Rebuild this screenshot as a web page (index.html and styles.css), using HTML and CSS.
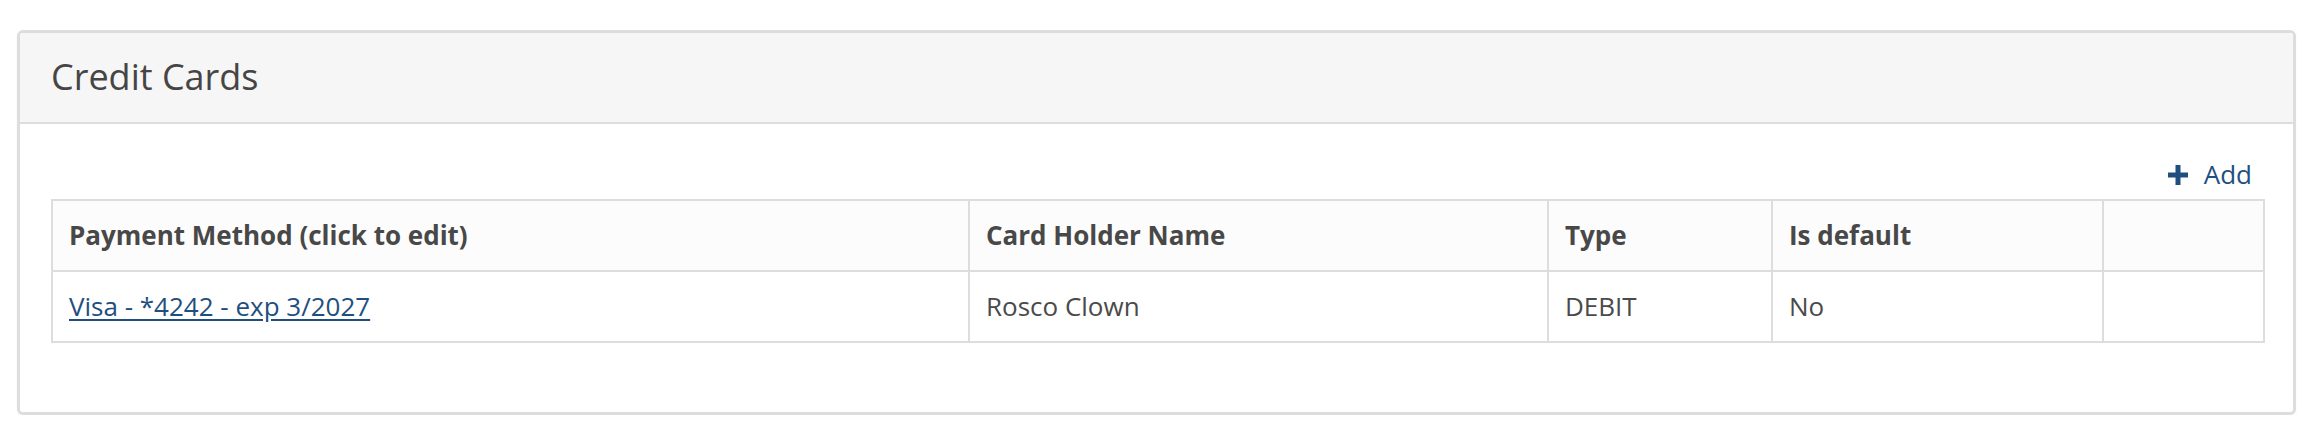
FILE: index.html
```html
<!DOCTYPE html>
<html lang="en">
<head>
<meta charset="utf-8">
<title>Credit Cards</title>
<link rel="stylesheet" href="styles.css">
</head>
<body>
<section class="panel">
  <header class="panel-heading">
    <h2 class="panel-title">Credit Cards</h2>
  </header>
  <div class="panel-body">
    <div class="actions">
      <a class="add-link" href="#">
        <svg class="plus" width="20" height="20" viewBox="0 0 20 20" aria-hidden="true">
          <rect x="7.5" y="0" width="5" height="20" fill="currentColor"/>
          <rect x="0" y="7.5" width="20" height="5" fill="currentColor"/>
        </svg>
        <span>Add</span>
      </a>
    </div>
    <table class="cards-table">
      <colgroup>
        <col class="c-method">
        <col class="c-holder">
        <col class="c-type">
        <col class="c-default">
        <col class="c-actions">
      </colgroup>
      <thead>
        <tr>
          <th>Payment Method (click to edit)</th>
          <th>Card Holder Name</th>
          <th>Type</th>
          <th>Is default</th>
          <th></th>
        </tr>
      </thead>
      <tbody>
        <tr>
          <td><a class="card-link" href="#">Visa - *4242 - exp 3/2027</a></td>
          <td>Rosco Clown</td>
          <td>DEBIT</td>
          <td>No</td>
          <td></td>
        </tr>
      </tbody>
    </table>
  </div>
</section>
</body>
</html>
```

FILE: styles.css
```css
* {
  box-sizing: border-box;
}

html, body {
  margin: 0;
  padding: 0;
  background: #ffffff;
}

body {
  font-family: "Open Sans", "Noto Sans", "Liberation Sans", sans-serif;
  font-size: 26px;
  line-height: 37px;
  color: #4a4a4a;
  padding: 30px 22px 0 17px;
}

.panel {
  border: 3px solid #dddddd;
  border-radius: 6px;
  background: #ffffff;
  box-shadow: 0 1px 2px rgba(0, 0, 0, 0.05);
  overflow: hidden;
}

.panel-heading {
  background: #f6f6f6;
  border-bottom: 2px solid #dddddd;
  padding: 24px 31px 25px 31px;
}

.panel-title {
  margin: 0;
  font-size: 36px;
  line-height: 40px;
  font-weight: 400;
  color: #454545;
}

.panel-body {
  padding: 30px 30px 30px 31px;
}

.actions {
  display: flex;
  justify-content: flex-end;
  padding-right: 11px;
  margin-bottom: 5px;
  line-height: 40px;
}

.add-link {
  color: #1f4f7e;
  text-decoration: none;
  white-space: nowrap;
}

.plus {
  vertical-align: -1px;
  margin-right: 9px;
}

.cards-table {
  width: 100%;
  border-collapse: collapse;
  table-layout: fixed;
  border: 2px solid #dddddd;
  margin-bottom: 39px;
}

.c-method { width: 917px; }
.c-holder { width: 579px; }
.c-type { width: 224px; }
.c-default { width: 331px; }
.c-actions { width: 161px; }

.cards-table th,
.cards-table td {
  border: 2px solid #dddddd;
  padding: 16px 16px;
  text-align: left;
  vertical-align: top;
  line-height: 37px;
  height: 71px;
}

.cards-table thead th {
  background: #fcfcfc;
  font-weight: 700;
  color: #484848;
}

.cards-table td {
  color: #4a4a4a;
}

.card-link {
  color: #1f4f7e;
  text-decoration: underline;
  text-underline-offset: 3px;
}
```
